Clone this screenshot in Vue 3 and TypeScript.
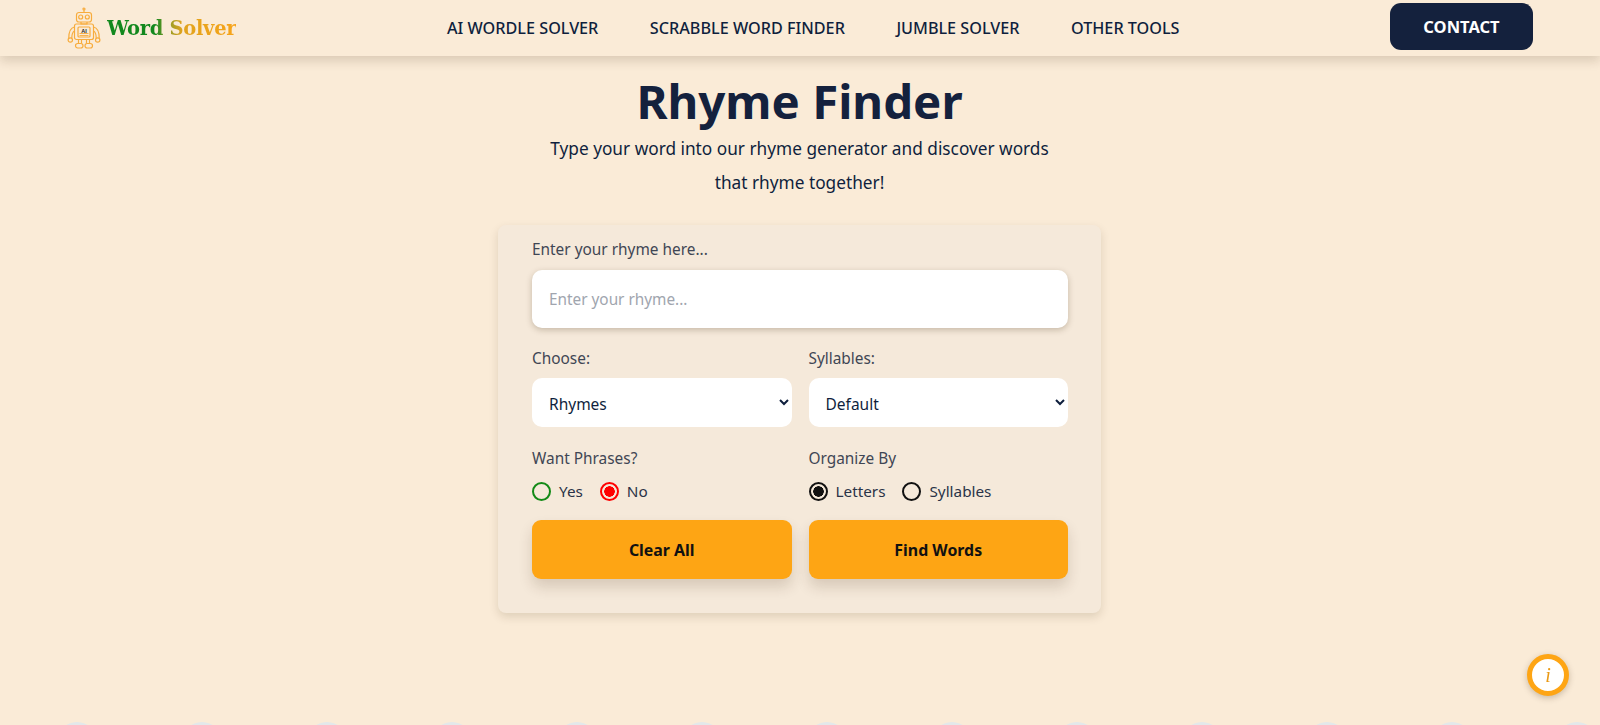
<script setup lang="ts">
import { ref } from 'vue'

const navLinks = ['AI WORDLE SOLVER', 'SCRABBLE WORD FINDER', 'JUMBLE SOLVER', 'OTHER TOOLS']
const bubbles = Array.from({ length: 13 }, (_, i) => i)

const rhyme = ref('')
const mode = ref('Rhymes')
const syllables = ref('Default')
const phrases = ref('no')
const organize = ref('letters')

function clearAll() {
  rhyme.value = ''
  mode.value = 'Rhymes'
  syllables.value = 'Default'
  phrases.value = 'no'
  organize.value = 'letters'
}
</script>

<template>
  <div class="page">
    <header class="header">
      <a class="logo" href="#">
        <svg class="robot" viewBox="0 0 34 42" fill="none" stroke="#f7ac3d" stroke-width="1.2">
          <circle cx="17" cy="2" r="1" />
          <path d="M17 3v2.500" />
          <rect x="9.500" y="5.500" width="15" height="9.500" rx="2.500" />
          <circle cx="13.700" cy="10" r="2" />
          <circle cx="20.300" cy="10" r="2" />
          <path d="M14 15v2h6v-2" />
          <rect x="7.500" y="17" width="19" height="15.500" rx="2" />
          <rect x="11" y="20" width="12" height="10" rx="1" />
          <path d="M12.500 26.500h9M12.500 28.500h9" stroke-width="0.9" />
          <path d="M7.500 20C3 21 1.800 26 1.800 31M4.800 31c0-3 .8-6 2.700-7M26.500 20c4.500 1 5.700 6 5.700 11M29.200 31c0-3-.8-6-2.700-7" />
          <circle cx="3.300" cy="33" r="2.200" />
          <circle cx="30.700" cy="33" r="2.200" />
          <path d="M11.500 32.500v4M14.500 32.500v4M19.500 32.500v4M22.500 32.500v4" />
          <rect x="8.500" y="36.500" width="7.500" height="4.500" rx="2.200" />
          <rect x="18" y="36.500" width="7.500" height="4.500" rx="2.200" />
          <text class="robot-ai" x="17" y="25.500" text-anchor="middle">AI</text>
        </svg>
        <span class="logo-text">Word Solver</span>
      </a>
      <nav class="nav">
        <a v-for="link in navLinks" :key="link" href="#">{{ link }}</a>
      </nav>
      <button class="contact" type="button">CONTACT</button>
    </header>

    <main class="main">
      <h1>Rhyme Finder</h1>
      <p class="intro">Type your word into our rhyme generator and discover words<br />that rhyme together!</p>

      <form class="card" @submit.prevent>
        <label class="field-label" for="rhyme">Enter your rhyme here...</label>
        <input id="rhyme" v-model="rhyme" class="text-input" type="text" placeholder="Enter your rhyme..." />

        <div class="grid selects">
          <div class="col">
            <label class="field-label" for="choose">Choose:</label>
            <select id="choose" v-model="mode">
              <option>Rhymes</option>
              <option>Near Rhymes</option>
            </select>
          </div>
          <div class="col">
            <label class="field-label" for="syllables">Syllables:</label>
            <select id="syllables" v-model="syllables">
              <option>Default</option>
              <option>1</option>
              <option>2</option>
              <option>3</option>
            </select>
          </div>
        </div>

        <div class="grid options">
          <div class="col">
            <span class="field-label">Want Phrases?</span>
            <div class="radios">
              <label><input v-model="phrases" class="green" type="radio" value="yes" />Yes</label>
              <label><input v-model="phrases" class="red" type="radio" value="no" />No</label>
            </div>
          </div>
          <div class="col">
            <span class="field-label">Organize By</span>
            <div class="radios">
              <label><input v-model="organize" type="radio" value="letters" />Letters</label>
              <label><input v-model="organize" type="radio" value="syllables" />Syllables</label>
            </div>
          </div>
        </div>

        <div class="grid actions">
          <button type="button" class="action" @click="clearAll">Clear All</button>
          <button type="submit" class="action">Find Words</button>
        </div>
      </form>
    </main>

    <div class="bubbles">
      <span v-for="b in bubbles" :key="b" class="bubble" />
    </div>

    <button class="info" type="button" aria-label="Info">i</button>
  </div>
</template>

<style scoped>
.page {
  height: 725px;
  overflow: hidden;
  background: #faebd7;
  color: #0f1f3d;
  font-family: "Noto Sans", "Open Sans", sans-serif;
}

.header {
  height: 56px;
  display: flex;
  align-items: center;
  padding: 0 67px;
  background: #faebd7;
  box-shadow: 0 5px 10px rgba(60, 40, 10, 0.16);
}

.logo {
  width: 380px;
  display: flex;
  align-items: center;
  gap: 6px;
  text-decoration: none;
}

.robot {
  width: 34px;
  height: 42px;
  flex: none;
}

.robot-ai {
  font: 700 5.500px "Liberation Sans", sans-serif;
  fill: #222;
  stroke: none;
}

.logo-text {
  font: 700 19.500px "DejaVu Serif", serif;
  letter-spacing: -0.3px;
  color: transparent;
  background: linear-gradient(90deg, #12881d 0 38%, #7d9a28 45%, #e0a31e 58%, #f7a41a 100%);
  background-clip: text;
  -webkit-background-clip: text;
}

.nav {
  display: flex;
  gap: 51.500px;
}

.nav a {
  color: #0f1f3d;
  font-size: 16.200px;
  font-weight: 500;
  text-decoration: none;
}

.contact {
  margin-left: auto;
  margin-bottom: 4px;
  width: 143px;
  height: 47px;
  border: none;
  border-radius: 11px;
  background: #14213d;
  color: #fff;
  font: 700 16.500px "Noto Sans", sans-serif;
}

.main {
  display: flex;
  flex-direction: column;
  align-items: center;
  padding-right: 1px;
}

h1 {
  margin: 13px 0 0;
  font-size: 47.400px;
  line-height: 64px;
  font-weight: 700;
  color: #14213d;
}

.intro {
  margin: -1px 0 0;
  text-align: center;
  font-size: 17.250px;
  line-height: 34px;
}

.card {
  box-sizing: border-box;
  width: 603px;
  height: 388px;
  margin-top: 25px;
  padding: 14px 33px 0 34px;
  background: #f5e9da;
  border-radius: 8px;
  box-shadow: 0 4px 10px rgba(60, 40, 10, 0.14);
  display: flex;
  flex-direction: column;
}

.field-label {
  display: block;
  font-size: 15.400px;
  line-height: 22px;
  color: #3f4654;
}

.text-input {
  box-sizing: border-box;
  width: 100%;
  height: 58px;
  margin-top: 9px;
  padding: 0 17px;
  border: none;
  border-radius: 10px;
  background: #fff;
  box-shadow: 0 2px 6px rgba(60, 40, 10, 0.25);
  font: 15.350px "Noto Sans", sans-serif;
  outline: none;
}

.text-input::placeholder {
  color: #a0a5ae;
}

.grid {
  display: grid;
  grid-template-columns: 1fr 1fr;
  column-gap: 17px;
}

.selects {
  margin-top: 20px;
}

.selects select {
  box-sizing: border-box;
  width: 100%;
  height: 49px;
  margin-top: 8px;
  padding: 2px 13px 0;
  border: none;
  border-radius: 10px;
  background: #fff;
  color: #0f1f3d;
  font: 15.500px "Noto Sans", sans-serif;
  outline: none;
}

.options {
  margin-top: 21px;
}

.radios {
  display: flex;
  gap: 17px;
  margin-top: 10px;
}

.radios label {
  display: flex;
  align-items: center;
  gap: 8px;
  font-size: 15.300px;
  line-height: 22px;
  color: #2a3347;
}

.radios input {
  appearance: none;
  box-sizing: border-box;
  width: 19px;
  height: 19px;
  margin: 0;
  border: 2px solid #111;
  border-radius: 50%;
  background: transparent;
}

.radios input:checked {
  background: radial-gradient(circle, #111 0 5px, transparent 5.500px);
}

.radios input.green {
  border-color: #138a17;
}

.radios input.red {
  border-color: #f00;
}

.radios input.red:checked {
  background: radial-gradient(circle, #f00 0 5px, transparent 5.500px);
}

.actions {
  margin-top: 18px;
}

.action {
  height: 59px;
  border: none;
  border-radius: 9px;
  background: #fea514;
  color: #111;
  font: 700 15.900px "Noto Sans", sans-serif;
  box-shadow: 0 8px 14px rgba(60, 40, 10, 0.16);
}

.bubbles {
  display: flex;
  gap: 85px;
  margin-top: 109px;
  padding-left: 57px;
}

.bubble {
  flex: none;
  width: 40px;
  height: 40px;
  border-radius: 50%;
  background: #e3e8ea;
}

.info {
  position: fixed;
  left: 1527px;
  top: 654px;
  box-sizing: border-box;
  width: 42px;
  height: 42px;
  padding: 0;
  border: 5px solid #fea514;
  border-radius: 50%;
  background: #fff;
  color: #ea9a16;
  font: italic 20px "Liberation Serif", serif;
  box-shadow: 0 2px 6px rgba(60, 40, 10, 0.25);
}
</style>
